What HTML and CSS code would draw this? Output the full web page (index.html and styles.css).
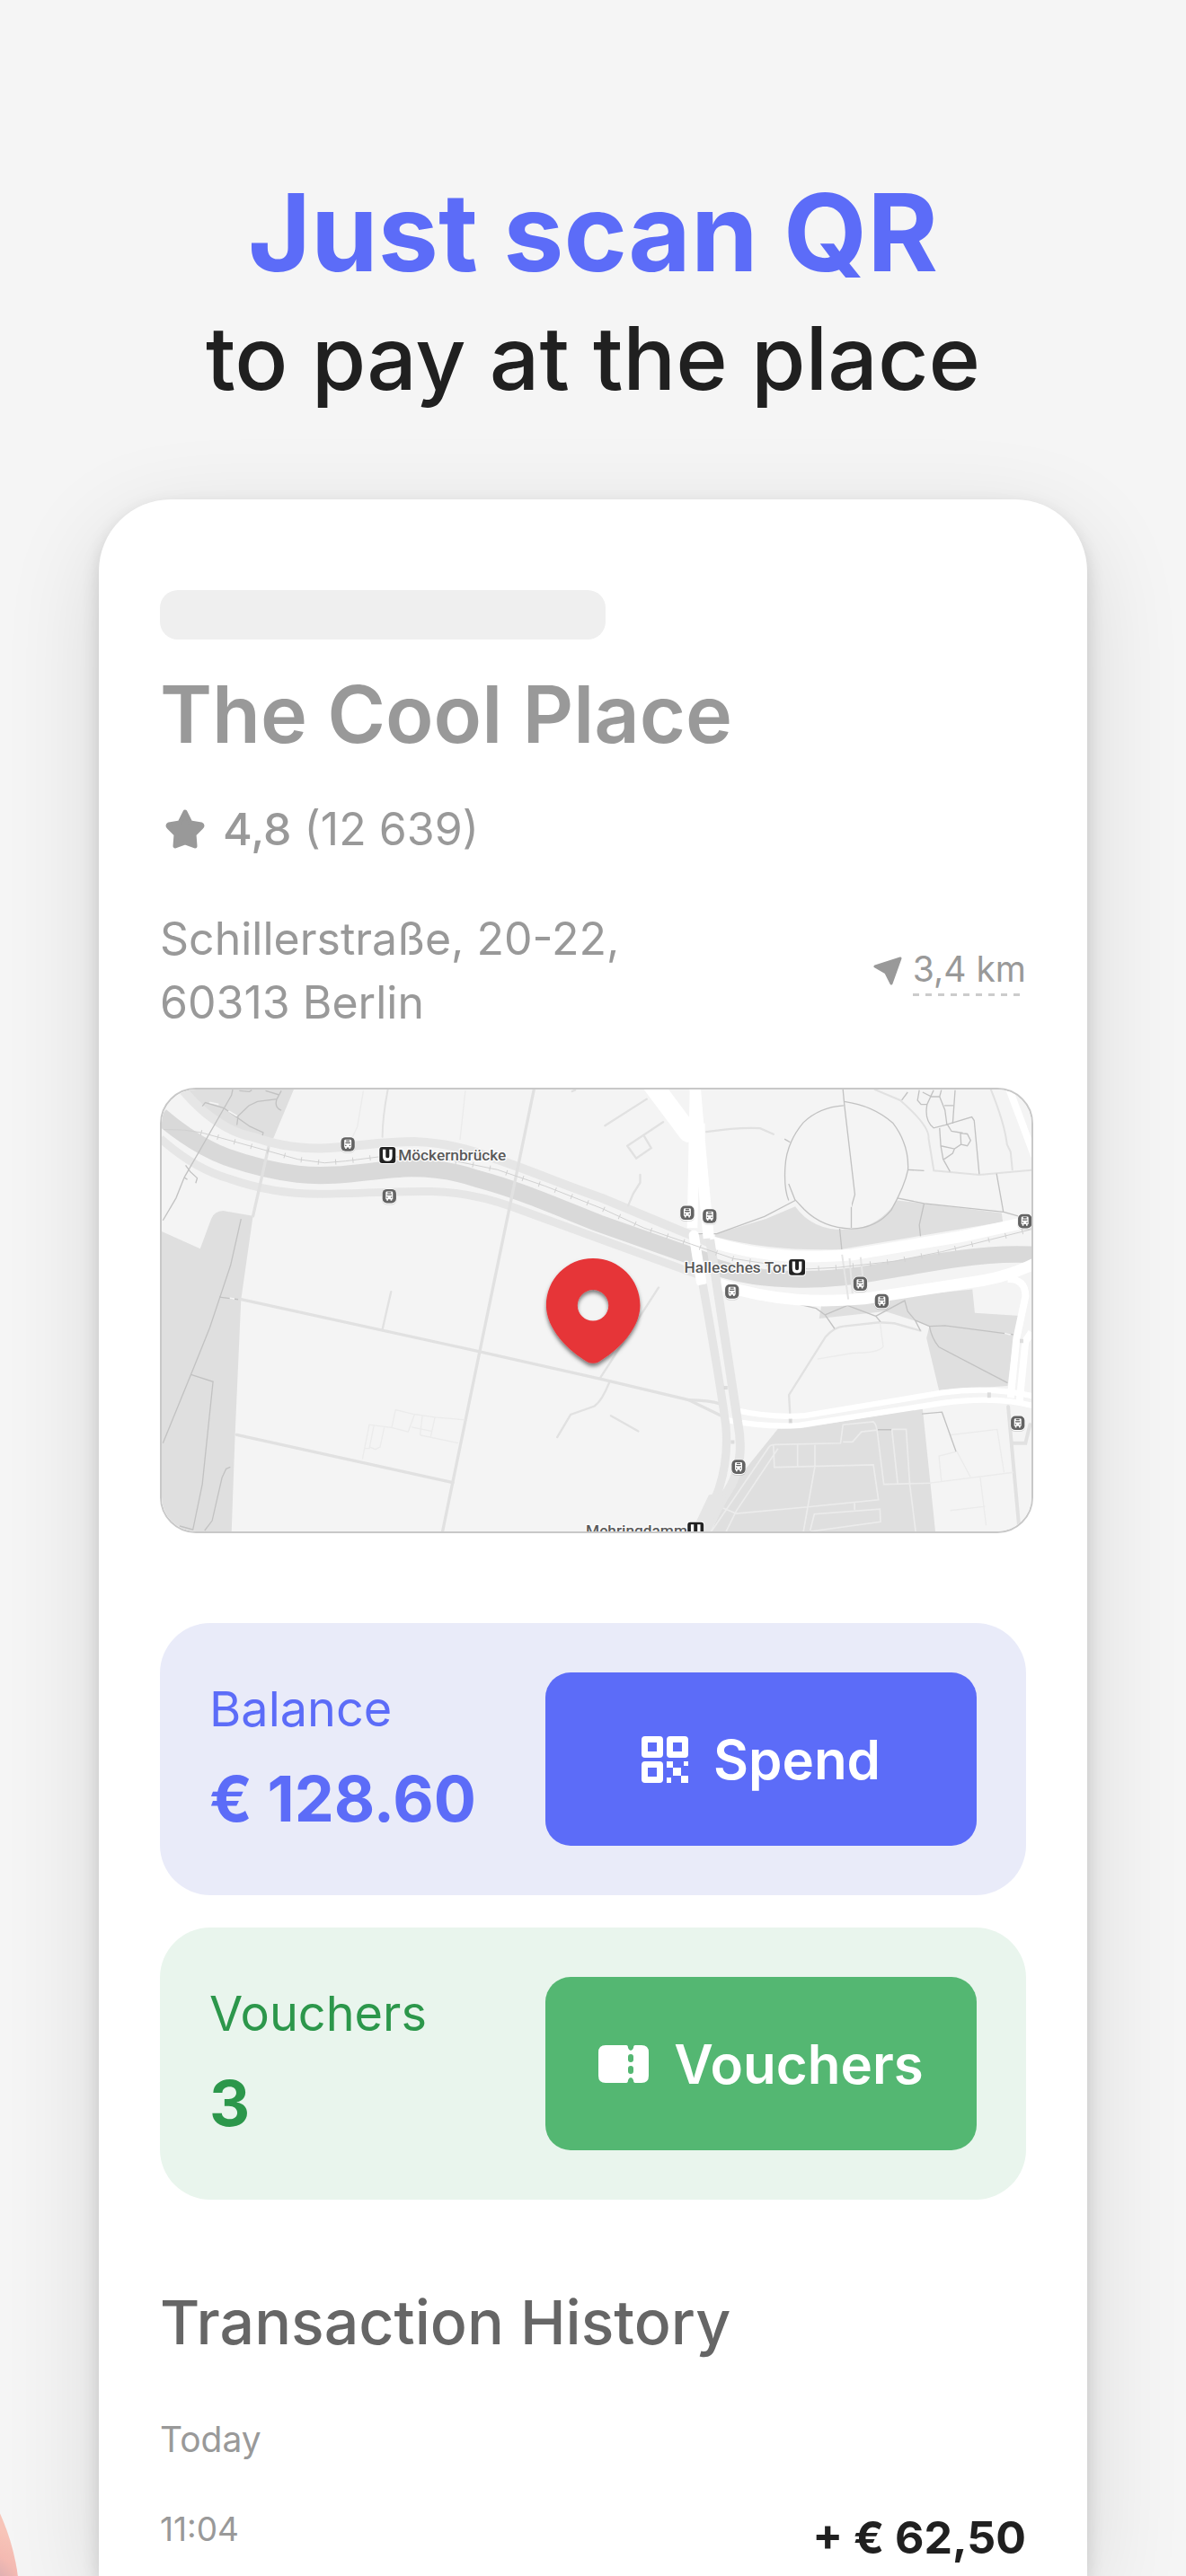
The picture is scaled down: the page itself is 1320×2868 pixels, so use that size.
FILE: index.html
```html
<!DOCTYPE html>
<html lang="en">

<head>
    <meta charset="UTF-8">
    <meta name="viewport" content="width=device-width, initial-scale=1.0">
    <title>The Cool Place</title>
    <link rel="stylesheet" href="styles.css">
</head>

<body>
    <div class="page">
        <div class="blob"></div>

        <header class="hero">
            <h1>Just scan QR</h1>
            <p>to pay at the place</p>
        </header>

        <main class="sheet">
            <div class="placeholder"></div>
            <h2 class="place-name">The Cool Place</h2>

            <div class="rating">
                <svg class="star" viewBox="0 0 48 48" aria-hidden="true">
                    <path d="M24 5L30 17L42 19Q44 20 42 22L34 30L35 43L24 39L13 43L14 30L6 22Q4 20 6 19L18 17Z" fill="#999" stroke="#999" stroke-width="5" stroke-linejoin="round"/>
                </svg>
                <span><b>4,8</b> (12 639)</span>
            </div>

            <div class="location">
                <address>Schillerstraße, 20-22,<br>60313 Berlin</address>
                <a class="distance" href="#map">
                    <svg viewBox="0 0 32 32" aria-hidden="true">
                        <path d="M2 11L30 2L20 30L14 18Z" fill="#999" stroke="#999" stroke-width="3" stroke-linejoin="round"/>
                    </svg>
                    <span>3,4 km</span>
                </a>
            </div>

            <div class="map" id="map">
                <svg viewBox="24 33 2916 1488" preserveAspectRatio="xMidYMid slice" role="img" aria-label="Map">
                    <defs>
                        <g id="bus">
                            <rect x="-25" y="-24" width="50" height="53" rx="17" fill="#000" opacity=".12"/>
                            <rect x="-25" y="-26" width="50" height="52" rx="17" fill="#fff"/>
                            <rect x="-23" y="-24" width="46" height="47" rx="15" fill="#636363"/>
                            <path d="M-12 -12Q-12 -16 -8 -16H8Q12 -16 12 -12V10H9V15H4V10H-4V15H-9V10H-12Z" fill="#fff"/>
                            <path d="M-6 -12H6M-8 -5H8" stroke="#636363" stroke-width="4"/>
                            <path d="M-9 4H-5M5 4H9" stroke="#636363" stroke-width="4"/>
                        </g>
                        <g id="ubahn">
                            <rect x="-30" y="-30" width="60" height="60" rx="12" fill="#fff"/>
                            <rect x="-27" y="-27" width="54" height="54" rx="9" fill="#222"/>
                            <path d="M-11 -19V4Q-11 15 0 15Q11 15 11 4V-19" fill="none" stroke="#fff" stroke-width="10"/>
                        </g>
                        <filter id="pinShadow" x="-20%" y="-20%" width="140%" height="140%">
                            <feDropShadow dx="0" dy="10" stdDeviation="7" flood-color="#000" flood-opacity=".5"/>
                        </filter>
                    </defs>

                    <rect x="0" y="0" width="3000" height="1600" fill="#f4f4f4"/>

                    <!-- parks, west side -->
                    <g fill="#dfdfdf">
                        <path d="M100 33H468L398 200L320 190L240 150L160 100Z"/>
                        <path d="M24 512L153 570L190 470Q200 444 230 443L330 460L290 740L270 1190L258 1521H24Z"/>
                    </g>

                    <!-- parks, east side -->
                    <g fill="#dfdfdf" transform="translate(1470 0)">
                        <path d="M410 520L580 470L678 428Q740 515 866 505Q960 495 1020 408L1370 450L1374 480L830 572Q600 580 410 530Z"/>
                        <path d="M766 758L1272 706L1280 785L1432 795L1412 860L1390 1030L1160 1045L1118 870L1128 830L1080 812L980 780L758 804Z"/>
                        <path d="M620 1174L700 1172L1105 1105L1148 1521H395L470 1360Z"/>
                    </g>

                    <!-- canal and its embankment roads -->
                    <g fill="none">
                        <path d="M80 20Q200 170 330 195Q440 235 560 233C680 228 760 210 880 211Q960 214 1040 236C1200 280 1350 350 1500 400L1860 550" stroke="#e6e6e6" stroke-width="30"/>
                        <path d="M20 200Q130 300 250 335Q400 388 560 386C700 385 840 375 930 378Q1060 380 1200 430L1500 540L1830 660" stroke="#e6e6e6" stroke-width="27"/>
                        <path d="M20 125Q130 220 240 262Q360 305 480 320C620 335 740 302 860 300Q980 300 1080 335C1230 375 1350 430 1490 485L1860 615" stroke="#d9d9d9" stroke-width="58"/>
                        <path d="M1860 625Q2010 678 2200 672C2360 670 2500 630 2700 603Q2830 584 2950 590" stroke="#d9d9d9" stroke-width="56"/>
                    </g>

                    <!-- side streets -->
                    <g fill="none" stroke="#e1e1e1" stroke-width="10" stroke-linecap="round">
                        <path d="M382 230L330 460"/>
                        <path d="M782 36Q764 130 764 195" stroke-width="6"/>
                        <path d="M1272 36L1090 915L965 1521"/>
                        <path d="M290 740L1090 915L1500 1008L1790 1077L1900 1130"/>
                        <path d="M1790 1077Q1860 1078 1895 1090"/>
                        <path d="M764 840L793 714" stroke-width="7"/>
                        <path d="M275 1194L1000 1354"/>
                        <path d="M1350 1202L1395 1126L1475 1098Q1500 1080 1524 1020M1495 1002L1690 700" stroke-width="7"/>
                        <path d="M1530 1130L1622 1182" stroke-width="7"/>
                        <path d="M1400 42L1410 38M1510 157L1650 68M1585 225L1705 145M1585 225L1615 267L1665 232L1640 190" stroke-width="7"/>
                        <path d="M1588 425L1605 385L1628 348V322" stroke-width="7"/>
                        <path d="M1850 178Q1960 162 2030 166L2075 186" stroke-width="7"/>
                        <path d="M2132 1150L2127 1060L2250 865Q2280 832 2310 830L2430 817L2480 820L2568 845" stroke-width="7"/>
                        <path d="M2415 36L2500 72Q2600 160 2595 200L2612 304M2612 308L2765 322L2940 306" stroke-width="6"/>
                        <path d="M2804 36Q2850 150 2858 220L2870 245L2876 305" stroke-width="6"/>
                        <path d="M2862 1100L2880 1300L2900 1521M2875 1222H2920L2935 1160" stroke-width="12"/>
                    </g>
                    <g fill="none" stroke="#ebebeb" stroke-width="4">
                        <path d="M697 1275L720 1160L795 1170L808 1110L870 1125L940 1135L1040 1144M795 1170L850 1184L872 1125M720 1160L704 1240H720L736 1160M722 1235L740 1243L756 1235L770 1170M890 1195L898 1130M890 1195L1018 1222M926 1200L940 1136M862 1168L928 1182"/>
                        <path d="M700 40L680 160L664 195M1042 40L1024 205M2222 940L2340 920Q2430 920 2443 898L2432 815"/>
                        <path d="M2665 1195L2825 1176L2848 1320M2638 1350L2630 1265L2690 1250L2735 1335M2600 1356L2880 1320M2768 1335L2788 1498M2668 1448L2785 1434"/>
                    </g>
                    <g fill="none" stroke="#ececec" stroke-width="5" transform="translate(1470 0)">
                        <path d="M395 1521L590 1235Q595 1227 610 1227L830 1222L838 1160L940 1150Q952 1160 955 1200L975 1360L1135 1356M605 1230L608 1303L940 1295L957 1412L720 1436L480 1458L432 1438M686 1228V1300M744 1228V1300L705 1521M838 1218H870L900 1184L952 1178M1002 1176L1022 1362M1002 1176H1050L1062 1360L1082 1521M445 1521L480 1450L620 1240M728 1515L742 1460L962 1443L964 1486L730 1518M877 1423V1446"/>
                    </g>

                    <!-- footpaths -->
                    <g fill="none" stroke="#c2c2c2" stroke-width="4">
                        <path d="M262 36L258 55L100 330L72 400L28 475M104 290L120 312L143 333L138 350M98 330L110 338"/>
                        <path d="M290 470L255 625L185 835L122 992L28 1222M122 992L196 1016L160 1360L128 1515M254 1302L240 1308L226 1338L193 1482L168 1515M217 732L280 740M84 1500L128 1512"/>
                        <path d="M160 92L170 80L232 98L320 160L364 180L362 190M276 155L280 125L316 90L345 76L410 68L425 40M410 68Q400 95 425 106M372 40L418 54M284 40L318 43L326 38"/>
                        <path d="M2126 408Q2110 370 2114 298Q2118 215 2175 147Q2230 95 2310 90M2312 76Q2410 90 2475 148Q2530 220 2526 305Q2515 360 2470 440Q2420 502 2336 503Q2240 500 2178 438L2148 406"/>
                        <path d="M2126 352L2148 408M2308 36L2313 90L2348 388L2336 430V500M2131 213L2112 202M2148 408L2045 462L1885 520H1820"/>
                        <path d="M2525 305L2580 308M2490 400L2580 418L2847 447L2895 460M2580 418L2564 490L2568 528M2823 318L2846 447M2297 503L2304 572"/>
                        <path d="M2505 72L2525 45M2564 38L2558 72L2570 86H2590L2612 38M2590 86Q2580 140 2612 165L2650 155L2740 128L2748 140L2765 320M2575 45L2605 60H2632L2650 105L2656 150L2672 176L2710 182M2632 60L2638 38M2676 150L2684 38M2648 90H2678M2632 165L2636 225L2644 270L2667 311M2636 225L2682 235L2704 220L2702 182L2725 185L2736 207L2725 225L2704 220M2682 235L2676 250L2644 272"/>
                        <path d="M2140 752L2218 770L2248 792L2280 838M2248 792L2323 760L2418 796L2434 815M2418 796L2515 744L2525 780L2550 810L2598 830L2650 828L2880 858M2550 810L2568 845M2598 830Q2605 870 2630 900L2860 1020M2573 1124L2640 1118L2687 1250M2425 1177H2470"/>
                    </g>
                    <g fill="none" stroke="#f4f4f4" stroke-width="5">
                        <path d="M184 79L215 86M248 108L276 125M252 736L268 738M2080 188L2110 200M2335 415V430M2850 854L2870 858"/>
                    </g>

                    <!-- main roads -->
                    <g fill="none" stroke="#fff">
                        <path d="M1670 20L1790 180" stroke-width="66" stroke-linecap="round"/>
                        <path d="M1812 20L1803 500" stroke-width="35"/>
                        <path d="M1812 20Q1830 250 1858 535" stroke-width="37"/>
                        <path d="M1785 150H1845V205H1785Z" fill="#fff"/>
                        <path d="M1808 525L1833 680" stroke-width="34" stroke-linecap="round"/>
                        <path d="M1860 545C2060 610 2230 598 2340 590L2700 530L2950 475" stroke-width="38"/>
                        <path d="M1895 690C2080 750 2240 750 2380 738L2720 685Q2850 670 2950 620" stroke-width="38"/>
                        <path d="M2860 672Q2920 670 2920 730L2890 870L2870 1070M2940 850L2920 880L2900 1080" stroke-width="24"/>
                        <path d="M1950 1112Q2070 1138 2180 1130L2640 1053Q2810 1030 2950 1066M1920 1145Q2050 1170 2160 1162L2640 1088Q2820 1062 2950 1098" stroke-width="19"/>
                        <path d="M2866 36L2950 260" stroke-width="24"/>
                    </g>
                    <g fill="none" stroke="#e5e5e5">
                        <path d="M1838 690Q1890 980 1915 1160Q1935 1370 1800 1545" stroke-width="28"/>
                        <path d="M1862 540L1955 1150Q1985 1300 1910 1400L1840 1530" stroke-width="30"/>
                        <path d="M1862 1400L1930 1385L1850 1530H1800Z" fill="#e5e5e5" stroke-width="10"/>
                        <path d="M1915 1030V1042M1938 1212V1224M2132 1140V1155M2798 1052V1070M2907 873V886" stroke="#ccc" stroke-width="12" opacity=".6"/>
                        <path d="M2305 590L2326 740M2330 602L2340 720M2367 598L2374 660" stroke-width="6"/>
                    </g>

                    <!-- railway -->
                    <g fill="none" stroke="#d0d0d0">
                        <path d="M30 170L100 172L155 180L330 228L480 270L570 282L640 276L750 262L940 262L1150 305L1310 360L1500 435L1640 500L1800 555L1940 603L2050 620L2190 638L2290 633L2480 612L2640 580L2800 540L2940 505" stroke-width="3"/>
                        <path d="M155 180L330 228L480 270L570 282L640 276L750 262L940 262L1150 305L1310 360L1500 435L1640 500L1800 555L1940 603L2050 620L2190 638L2290 633L2480 612L2640 580L2800 540L2940 505" stroke-width="18" stroke-dasharray="3 55"/>
                    </g>

                    <!-- stations and labels -->
                    <use href="#bus" x="648" y="220"/>
                    <use href="#bus" x="787" y="394"/>
                    <use href="#bus" x="1786" y="450"/>
                    <use href="#bus" x="1861" y="461"/>
                    <use href="#bus" x="1936" y="714"/>
                    <use href="#bus" x="2366" y="688"/>
                    <use href="#bus" x="2438" y="746"/>
                    <use href="#bus" x="2918" y="478"/>
                    <use href="#bus" x="2894" y="1155"/>
                    <use href="#bus" x="1958" y="1302"/>
                    <g class="map-label">
                        <text x="817" y="275">Möckernbrücke</text>
                        <text x="1776" y="650">Hallesches Tor</text>
                        <text x="1446" y="1532">Mehringdamm</text>
                    </g>
                    <use href="#ubahn" x="781" y="256"/>
                    <use href="#ubahn" x="2154" y="632"/>
                    <use href="#ubahn" x="1814" y="1514"/>

                    <!-- pin -->
                    <path d="M1470 602C1382 602 1313 672 1313 760C1313 840 1390 915 1452 950Q1470 958 1488 950C1550 915 1628 840 1628 760C1628 672 1558 602 1470 602ZM1470 708A52 52 0 1 1 1470 812A52 52 0 1 1 1470 708Z" fill="#e63438" fill-rule="evenodd" filter="url(#pinShadow)"/>
                </svg>
            </div>

            <section class="tile tile-balance">
                <div class="tile-info">
                    <span class="tile-label">Balance</span>
                    <strong>€ 128.60</strong>
                </div>
                <button type="button">
                    <svg class="icon-qr" viewBox="0 0 52 52" aria-hidden="true">
                        <path fill="#fff" fill-rule="evenodd" d="M4 0H20Q24 0 24 4V20Q24 24 20 24H4Q0 24 0 20V4Q0 0 4 0ZM7 7V17H17V7ZM32 0H48Q52 0 52 4V20Q52 24 48 24H32Q28 24 28 20V4Q28 0 32 0ZM35 7V17H45V7ZM4 28H20Q24 28 24 32V48Q24 52 20 52H4Q0 52 0 48V32Q0 28 4 28ZM7 35V45H17V35Z"/>
                        <path fill="#fff" d="M28 28H35V35H28ZM47 28H52V33H47ZM35 35H44V44H35ZM28 46H33V52H28ZM44 44H52V52H44Z"/>
                    </svg>
                    Spend
                </button>
            </section>

            <section class="tile tile-vouchers">
                <div class="tile-info">
                    <span class="tile-label">Vouchers</span>
                    <strong>3</strong>
                </div>
                <button type="button">
                    <svg class="icon-voucher" viewBox="0 0 56 42" aria-hidden="true">
                        <path fill="#fff" d="M8 0H31Q33 0 33 3Q34 6 36 6Q38 6 39 3Q39 0 41 0H48Q56 0 56 8V34Q56 42 48 42H41Q39 42 39 39Q38 36 36 36Q34 36 33 39Q33 42 31 42H8Q0 42 0 34V8Q0 0 8 0Z"/>
                        <rect x="33" y="10" width="6" height="9" rx="3" fill="#54b772"/>
                        <rect x="33" y="23" width="6" height="9" rx="3" fill="#54b772"/>
                    </svg>
                    Vouchers
                </button>
            </section>

            <section class="history">
                <h3>Transaction History</h3>
                <p class="day">Today</p>
                <div class="transaction">
                    <time>11:04</time>
                    <span class="amount">+ € 62,50</span>
                </div>
            </section>
        </main>
    </div>
</body>

</html>
```
FILE: styles.css
```css
* {
    margin: 0;
    padding: 0;
    box-sizing: border-box;
}

body {
    background-color: #f5f5f5;
    font-family: Inter, 'Open Sans', sans-serif;
    color: #999;
}

.page {
    position: relative;
    display: flex;
    flex-direction: column;
    min-height: 100vh;
    padding: 189px 110px 0;
    overflow: hidden;
}

/* Soft coloured shape peeking in behind the sheet */
.blob {
    position: absolute;
    left: -468px;
    bottom: -277px;
    width: 490px;
    height: 490px;
    border-radius: 50%;
    background: radial-gradient(circle at 448px 230px, #a79ab8 0, #dbaeb2 22px, #f4bab2 44px, #f7c4b8 70px);
}

.hero {
    margin-bottom: 97px;
    text-align: center;
}

.hero h1 {
    margin-bottom: 10px;
    font-size: 120px;
    line-height: 140px;
    font-weight: 700;
    color: #5c6cf8;
}

.hero p {
    font-size: 98px;
    line-height: 120px;
    font-weight: 500;
    color: #202020;
}

.sheet {
    position: relative;
    flex: 1;
    padding: 101px 68px 0;
    border-radius: 80px 80px 0 0;
    background: #fff;
    box-shadow: 0 8px 20px rgba(0, 0, 0, 0.14), 0 30px 110px rgba(0, 0, 0, 0.12);
}

.placeholder {
    width: 496px;
    height: 55px;
    margin-bottom: 28px;
    border-radius: 20px;
    background: #efefef;
}

.place-name {
    margin-bottom: 38px;
    font-size: 88px;
    line-height: 110px;
    font-weight: 600;
}

.rating {
    display: flex;
    align-items: center;
    gap: 18px;
    margin-bottom: 52px;
    padding-left: 4px;
    font-size: 50px;
    line-height: 70px;
}

.rating b {
    font-weight: 500;
}

.star {
    width: 48px;
    height: 48px;
}

.location {
    display: flex;
    align-items: center;
    justify-content: space-between;
    margin-bottom: 59px;
}

address {
    font-size: 50px;
    line-height: 71px;
    font-style: normal;
}

.distance {
    display: flex;
    align-items: center;
    gap: 12px;
    font-size: 39px;
    line-height: 50px;
    color: #999;
    text-decoration: none;
}

.distance svg {
    width: 32px;
    height: 32px;
}

.distance span {
    padding-bottom: 5px;
    background: repeating-linear-gradient(90deg, #ccc 0, #ccc 7px, transparent 7px, transparent 14px) bottom / 100% 3px no-repeat;
}

.map {
    aspect-ratio: 972 / 496;
    margin: 0 -8px 100px 0;
    border: 2px solid #c8c8c8;
    border-radius: 40px;
    overflow: hidden;
}

.map svg {
    display: block;
    width: 100%;
    height: 100%;
}

.map-label {
    font-family: Roboto, sans-serif;
    font-size: 52px;
    font-weight: 500;
    fill: #595959;
    stroke: #fff;
    stroke-width: 7px;
    stroke-linejoin: round;
    paint-order: stroke;
}

.tile {
    display: flex;
    align-items: center;
    justify-content: space-between;
    margin-bottom: 36px;
    padding: 55px;
    border-radius: 56px;
}

.tile-balance {
    background: #e9ebf9;
    color: #5c6cf8;
}

.tile-vouchers {
    background: #e9f5ed;
    color: #2c974b;
}

.tile-info {
    display: flex;
    flex-direction: column;
    gap: 22px;
}

.tile-label {
    font-size: 54px;
    line-height: 66px;
}

.tile-info strong {
    font-size: 70px;
    line-height: 90px;
    font-weight: 700;
}

.tile button {
    display: flex;
    align-items: center;
    justify-content: center;
    gap: 28px;
    width: 480px;
    height: 193px;
    border: none;
    border-radius: 28px;
    background: #5c6cf8;
    color: #fff;
    font-family: inherit;
    font-size: 60px;
    font-weight: 600;
    cursor: pointer;
}

.tile-vouchers button {
    background: #54b772;
}

.icon-qr {
    width: 52px;
    height: 52px;
}

.icon-voucher {
    width: 56px;
    height: 42px;
}

.history {
    padding-top: 58px;
}

.history h3 {
    margin-bottom: 64px;
    font-size: 68px;
    line-height: 84px;
    font-weight: 500;
    color: #666;
}

.day {
    margin-bottom: 52px;
    font-size: 39px;
    line-height: 50px;
}

.transaction {
    display: flex;
    justify-content: space-between;
}

.transaction time {
    font-size: 37px;
    line-height: 46px;
}

.amount {
    font-size: 50px;
    line-height: 64px;
    font-weight: 700;
    color: #202020;
}
```
